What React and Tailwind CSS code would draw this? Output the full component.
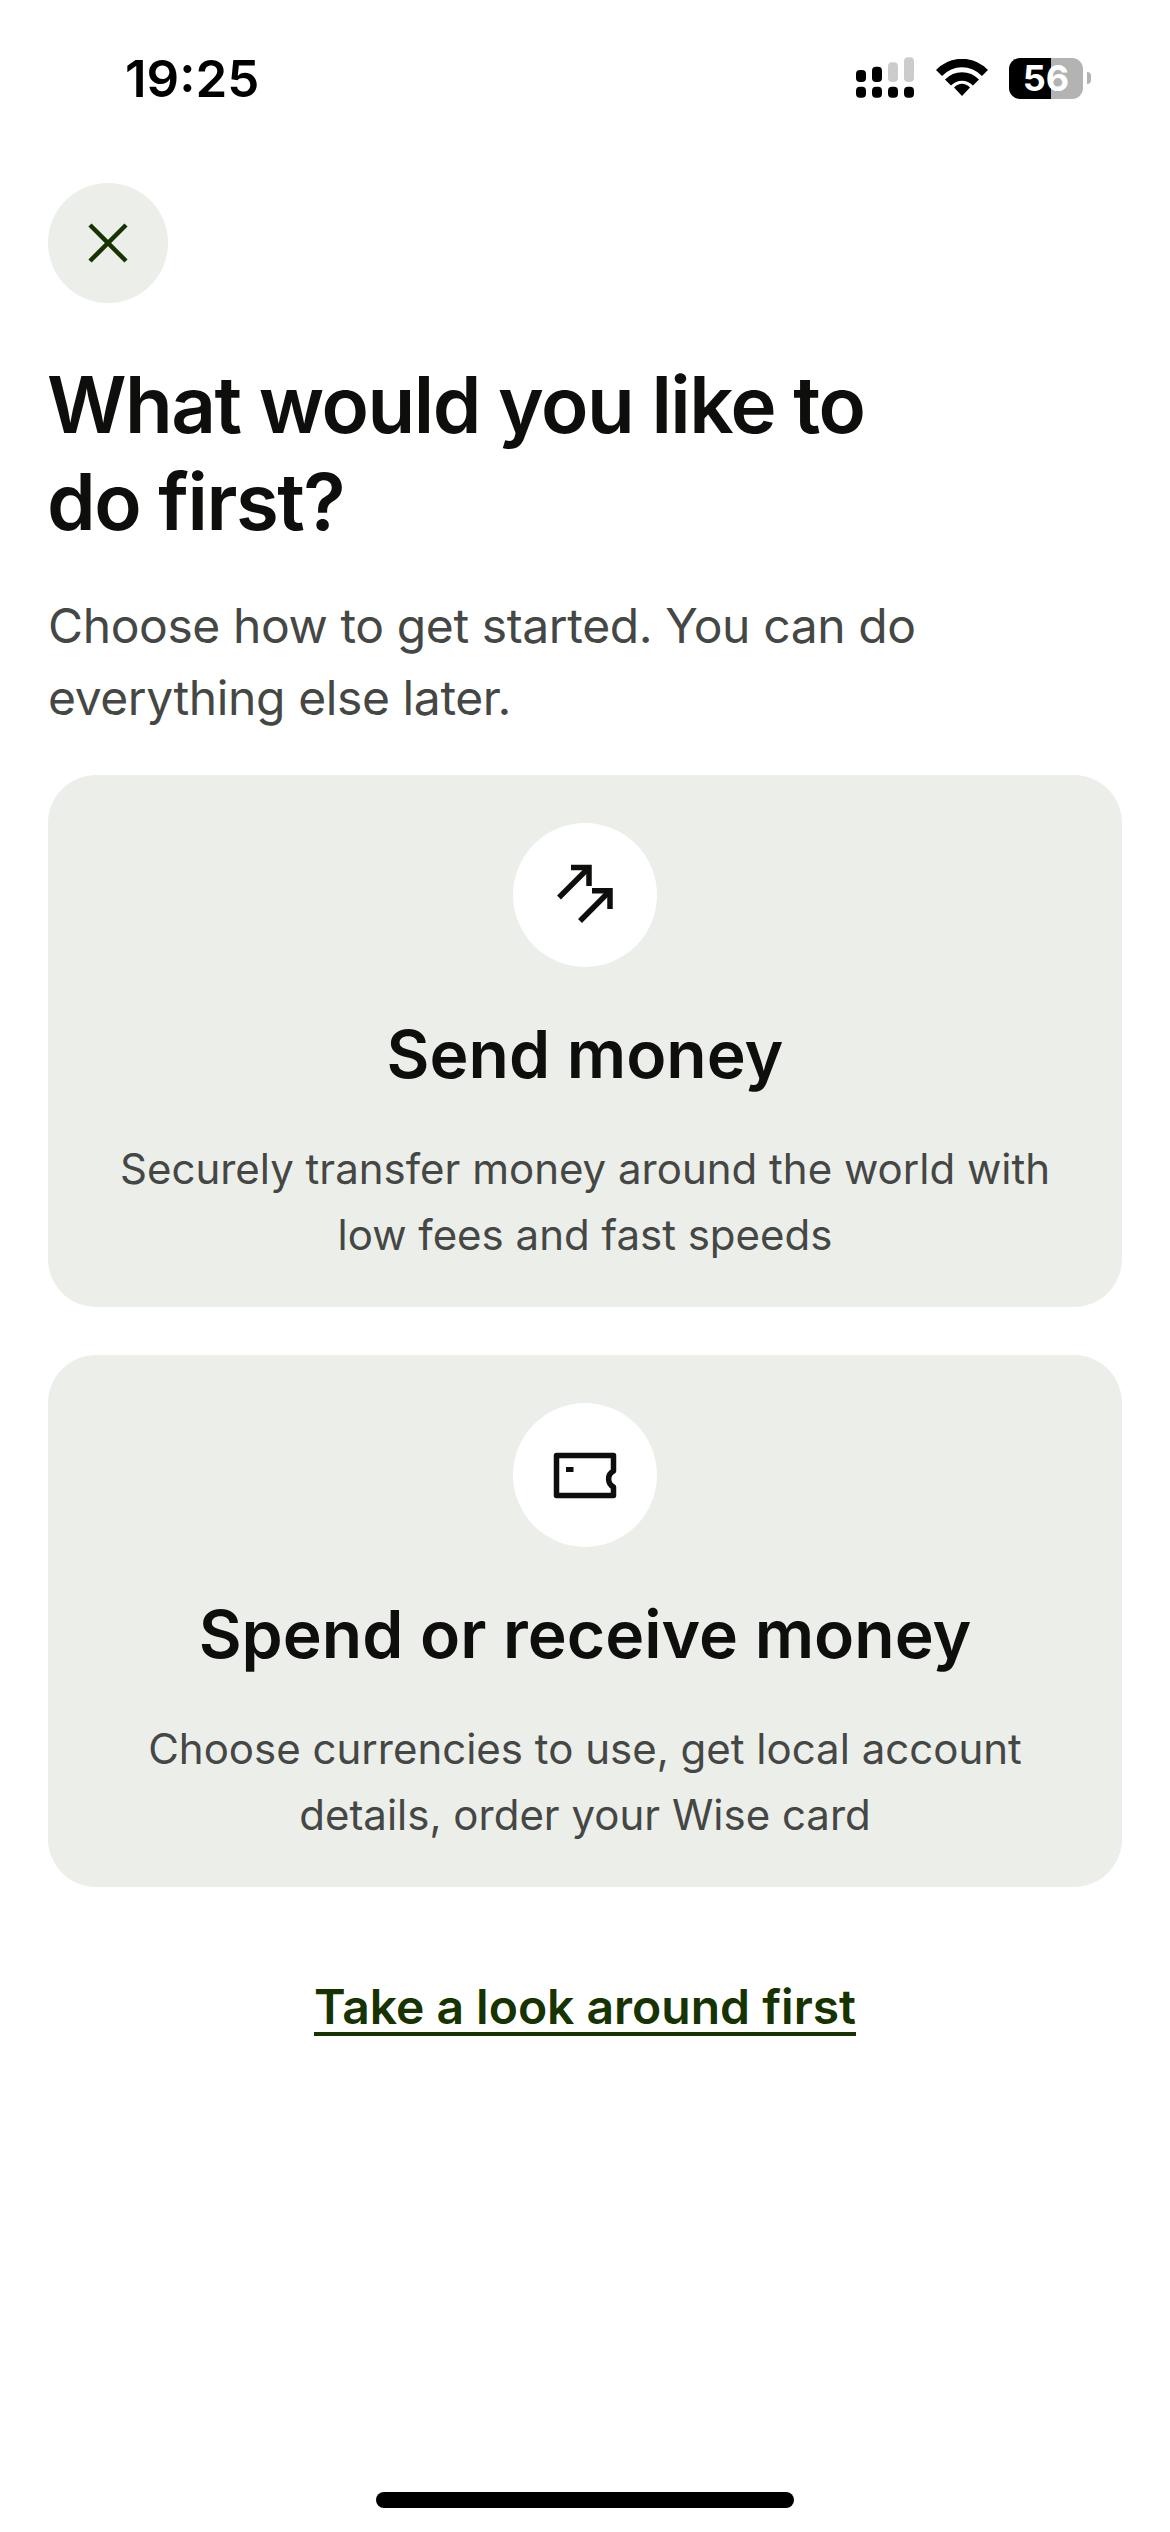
import React from "react";

function StatusBar() {
  return (
    <div className="h-[132px] flex items-center pt-[24px] pl-[125px] pr-[79px] justify-between">
      <span className="text-[51px] font-semibold leading-none text-black">19:25</span>
      <div className="flex items-center">
        <svg width="60" height="50" viewBox="0 0 60 50" className="mr-[10px]">
          <rect x="0" y="17" width="10" height="12" rx="4" fill="#000" />
          <rect x="16" y="13.7" width="10" height="15.3" rx="4" fill="#000" />
          <rect x="32" y="9.3" width="10" height="19.7" rx="4" fill="#ccc" />
          <rect x="48" y="4.3" width="10" height="24.7" rx="4" fill="#ccc" />
          <rect x="0" y="33.7" width="10" height="11" rx="4" fill="#000" />
          <rect x="16" y="33.7" width="10" height="11" rx="4" fill="#000" />
          <rect x="32" y="33.7" width="10" height="11" rx="4" fill="#000" />
          <rect x="48" y="33.7" width="10" height="11" rx="4" fill="#000" />
        </svg>
        <svg width="52" height="38" viewBox="0 0 52 38" className="ml-[10px] mr-[21px]">
          <path d="M3 14 C16 0.7 36 0.7 49 14" fill="none" stroke="#000" strokeWidth="8.5" />
          <path d="M12 23.5 C20 15.5 32 15.5 40 23.5" fill="none" stroke="#000" strokeWidth="8.5" />
          <path d="M18 28.5 C23 23.5 29 23.5 34 28.5 L26 37 Z" fill="#000" />
        </svg>
        <div className="relative w-[74px] h-[41px] flex">
          <div className="w-[42px] bg-black rounded-l-[11px]" />
          <div className="flex-1 bg-[#b3b3b3] rounded-r-[11px]" />
          <span className="absolute inset-0 flex items-center justify-center text-[36px] font-bold leading-[41px] text-white">56</span>
        </div>
        <div className="w-[4px] h-[12px] ml-[4px] rounded-r-full bg-[#b3b3b3]" />
      </div>
    </div>
  );
}

function ArrowsIcon() {
  return (
    <svg width="72" height="72" viewBox="0 0 72 72" fill="none" stroke="#0e0f0c" strokeWidth="5.5">
      <path d="M10 38.5 L40 8.5" />
      <path d="M22 8.5 H40 V27" />
      <path d="M31 62 L61 31.7" />
      <path d="M43 31.7 H61 V50" />
    </svg>
  );
}

function CardIcon() {
  return (
    <svg width="72" height="72" viewBox="0 0 72 72" fill="none">
      <path
        d="M7.5 16.5 H64.5 V32 A9 9 0 0 0 64.5 48 V56.5 H7.5 Z"
        stroke="#0e0f0c"
        strokeWidth="5.5"
        strokeLinejoin="round"
      />
      <rect x="17" y="28" width="7.5" height="5" fill="#0e0f0c" />
    </svg>
  );
}

function OptionCard({ icon, title, lines }) {
  return (
    <div className="h-[532px] rounded-[48px] bg-[#eceeea] pt-[48px] flex flex-col items-center text-center">
      <div className="w-[144px] h-[144px] rounded-full bg-white flex items-center justify-center">{icon}</div>
      <h2 className="mt-[54px] text-[66px] leading-[66px] font-[610] text-[#0e0f0c]">{title}</h2>
      <p className="mt-[49px] text-[42px] leading-[66px] text-[#454745]">
        {lines[0]}
        <br />
        {lines[1]}
      </p>
    </div>
  );
}

export default function App() {
  return (
    <div className="h-[2532px] bg-white flex flex-col font-['Inter',sans-serif]">
      <StatusBar />
      <div className="px-[48px] flex flex-col">
        <button className="mt-[51px] w-[120px] h-[120px] rounded-full bg-[#eceeea] flex items-center justify-center">
          <svg width="44" height="44" viewBox="0 0 44 44" fill="none" stroke="#163300" strokeWidth="4.5">
            <path d="M4 4 L40 40 M40 4 L4 40" />
          </svg>
        </button>
        <h1 className="mt-[53px] text-[78px] leading-[97px] font-[620] text-[#0e0f0c] tracking-[-1.5px] -ml-[1px]">
          What would you like to
          <br />
          do first?
        </h1>
        <p className="mt-[40px] text-[48px] leading-[72px] text-[#454745] tracking-[-0.4px]">
          Choose how to get started. You can do
          <br />
          everything else later.
        </p>
        <div className="mt-[41px] flex flex-col gap-[48px]">
          <OptionCard
            icon={<ArrowsIcon />}
            title="Send money"
            lines={["Securely transfer money around the world with", "low fees and fast speeds"]}
          />
          <OptionCard
            icon={<CardIcon />}
            title="Spend or receive money"
            lines={["Choose currencies to use, get local account", "details, order your Wise card"]}
          />
        </div>
        <a className="mt-[88px] self-center text-[48px] leading-[64px] font-semibold text-[#163300] underline underline-offset-[8px] decoration-[4px]">
          Take a look around first
        </a>
      </div>
      <div className="mt-auto mb-[24px] self-center w-[418px] h-[16px] rounded-full bg-black" />
    </div>
  );
}
